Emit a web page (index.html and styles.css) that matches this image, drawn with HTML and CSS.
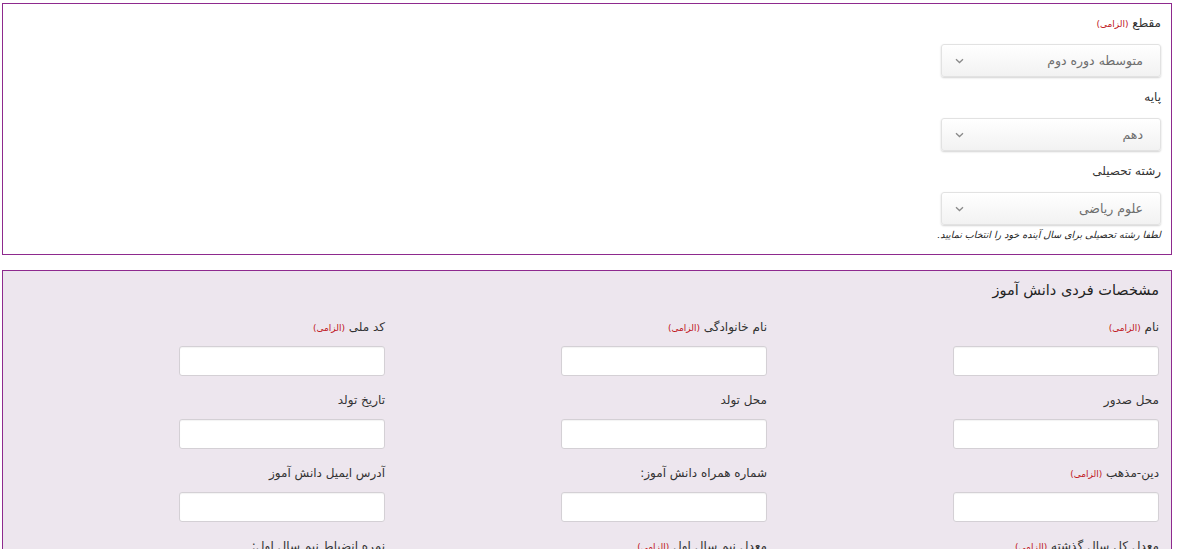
FILE: index.html
```html
<!DOCTYPE html>
<html lang="fa" dir="rtl">
<head>
<meta charset="utf-8">
<title>فرم ثبت نام</title>
<link rel="stylesheet" href="styles.css">
</head>
<body>
<section class="box box-level">
  <div class="group">
    <div class="label">مقطع <span class="req">(الزامی)</span></div>
    <div class="select"><span class="sel-text">متوسطه دوره دوم</span><svg class="chev" width="9" height="6" viewBox="0 0 9 6"><path d="M1 1.2 L4.5 4.5 L8 1.2" fill="none" stroke="#8a8a8a" stroke-width="1.3"/></svg></div>
  </div>
  <div class="group">
    <div class="label">پایه</div>
    <div class="select"><span class="sel-text">دهم</span><svg class="chev" width="9" height="6" viewBox="0 0 9 6"><path d="M1 1.2 L4.5 4.5 L8 1.2" fill="none" stroke="#8a8a8a" stroke-width="1.3"/></svg></div>
  </div>
  <div class="group last">
    <div class="label">رشته تحصیلی</div>
    <div class="select"><span class="sel-text">علوم ریاضی</span><svg class="chev" width="9" height="6" viewBox="0 0 9 6"><path d="M1 1.2 L4.5 4.5 L8 1.2" fill="none" stroke="#8a8a8a" stroke-width="1.3"/></svg></div>
    <div class="help">لطفا رشته تحصیلی برای سال آینده خود را انتخاب نمایید.</div>
  </div>
</section>

<section class="box box-person">
  <h2 class="title">مشخصات فردی دانش آموز</h2>
  <div class="fields">
    <div class="col col-r">
      <div class="field"><div class="label">نام <span class="req">(الزامی)</span></div><div class="input"></div></div>
      <div class="field"><div class="label">محل صدور</div><div class="input"></div></div>
      <div class="field"><div class="label">دین-مذهب <span class="req">(الزامی)</span></div><div class="input"></div></div>
      <div class="field"><div class="label">معدل کل سال گذشته <span class="req">(الزامی)</span></div><div class="input"></div></div>
    </div>
    <div class="col col-m">
      <div class="field"><div class="label">نام خانوادگی <span class="req">(الزامی)</span></div><div class="input"></div></div>
      <div class="field"><div class="label">محل تولد</div><div class="input"></div></div>
      <div class="field"><div class="label">شماره همراه دانش آموز:</div><div class="input"></div></div>
      <div class="field"><div class="label">معدل نیم سال اول <span class="req">(الزامی)</span></div><div class="input"></div></div>
    </div>
    <div class="col col-l">
      <div class="field"><div class="label">کد ملی <span class="req">(الزامی)</span></div><div class="input"></div></div>
      <div class="field"><div class="label">تاریخ تولد</div><div class="input"></div></div>
      <div class="field"><div class="label">آدرس ایمیل دانش آموز</div><div class="input"></div></div>
      <div class="field"><div class="label">نمره انضباط نیم سال اول:</div><div class="input"></div></div>
    </div>
  </div>
</section>
</body>
</html>
```

FILE: styles.css
```css
html, body {
  margin: 0;
  padding: 0;
  background: #ffffff;
  overflow: hidden;
}
body {
  padding: 3px 11px 0 2px;
  font-family: "DejaVu Sans", "Noto Sans", sans-serif;
  color: #333333;
  font-size: 12px;
}
.box {
  border: 1px solid #8e2a8e;
  box-sizing: border-box;
}
.box-level {
  height: 252px;
  padding: 11px 10px 0 10px;
  display: flex;
  flex-direction: column;
  align-items: flex-start;
}
.group {
  width: 220px;
  height: 74px;
  display: flex;
  flex-direction: column;
}
.group.last {
  height: auto;
  width: auto;
}
.label {
  font-size: 12px;
  line-height: 16px;
  height: 16px;
  color: #333;
  white-space: nowrap;
}
.req {
  color: #c0141b;
  font-size: 9px;
}
.group .label {
  margin-bottom: 13px;
}
.select {
  width: 220px;
  height: 33px;
  box-sizing: border-box;
  border: 1px solid #e2e2e2;
  border-radius: 3px;
  background: linear-gradient(#ffffff, #f2f2f2);
  box-shadow: 0 1px 2px rgba(0,0,0,0.18);
  display: flex;
  align-items: center;
  justify-content: space-between;
  padding: 0 17px 0 13px;
}
.sel-text {
  font-size: 12.5px;
  color: #6e6e6e;
}
.chev {
  display: block;
  margin-top: 1px;
}
.help {
  margin-top: 4px;
  font-size: 9.5px;
  line-height: 12px;
  font-style: italic;
  color: #222;
  white-space: nowrap;
}
.box-person {
  margin-top: 15px;
  background: #ede6ee;
  height: 300px;
  padding: 9px 12px 0 10px;
}
.title {
  margin: 0;
  font-size: 14.5px;
  line-height: 20px;
  font-weight: normal;
  color: #222;
}
.fields {
  margin-top: 19px;
  display: flex;
}
.col {
  width: 206px;
  display: flex;
  flex-direction: column;
}
.col-r {
  margin-right: 0;
}
.col-m {
  margin-right: 186px;
}
.col-l {
  margin-right: 176px;
}
.field {
  height: 73px;
}
.field .label {
  margin-bottom: 11px;
}
.input {
  height: 30px;
  box-sizing: border-box;
  background: #ffffff;
  border: 1px solid #d4d0d5;
  border-radius: 3px;
  box-shadow: inset 0 1px 1px rgba(0,0,0,0.05);
}
```
